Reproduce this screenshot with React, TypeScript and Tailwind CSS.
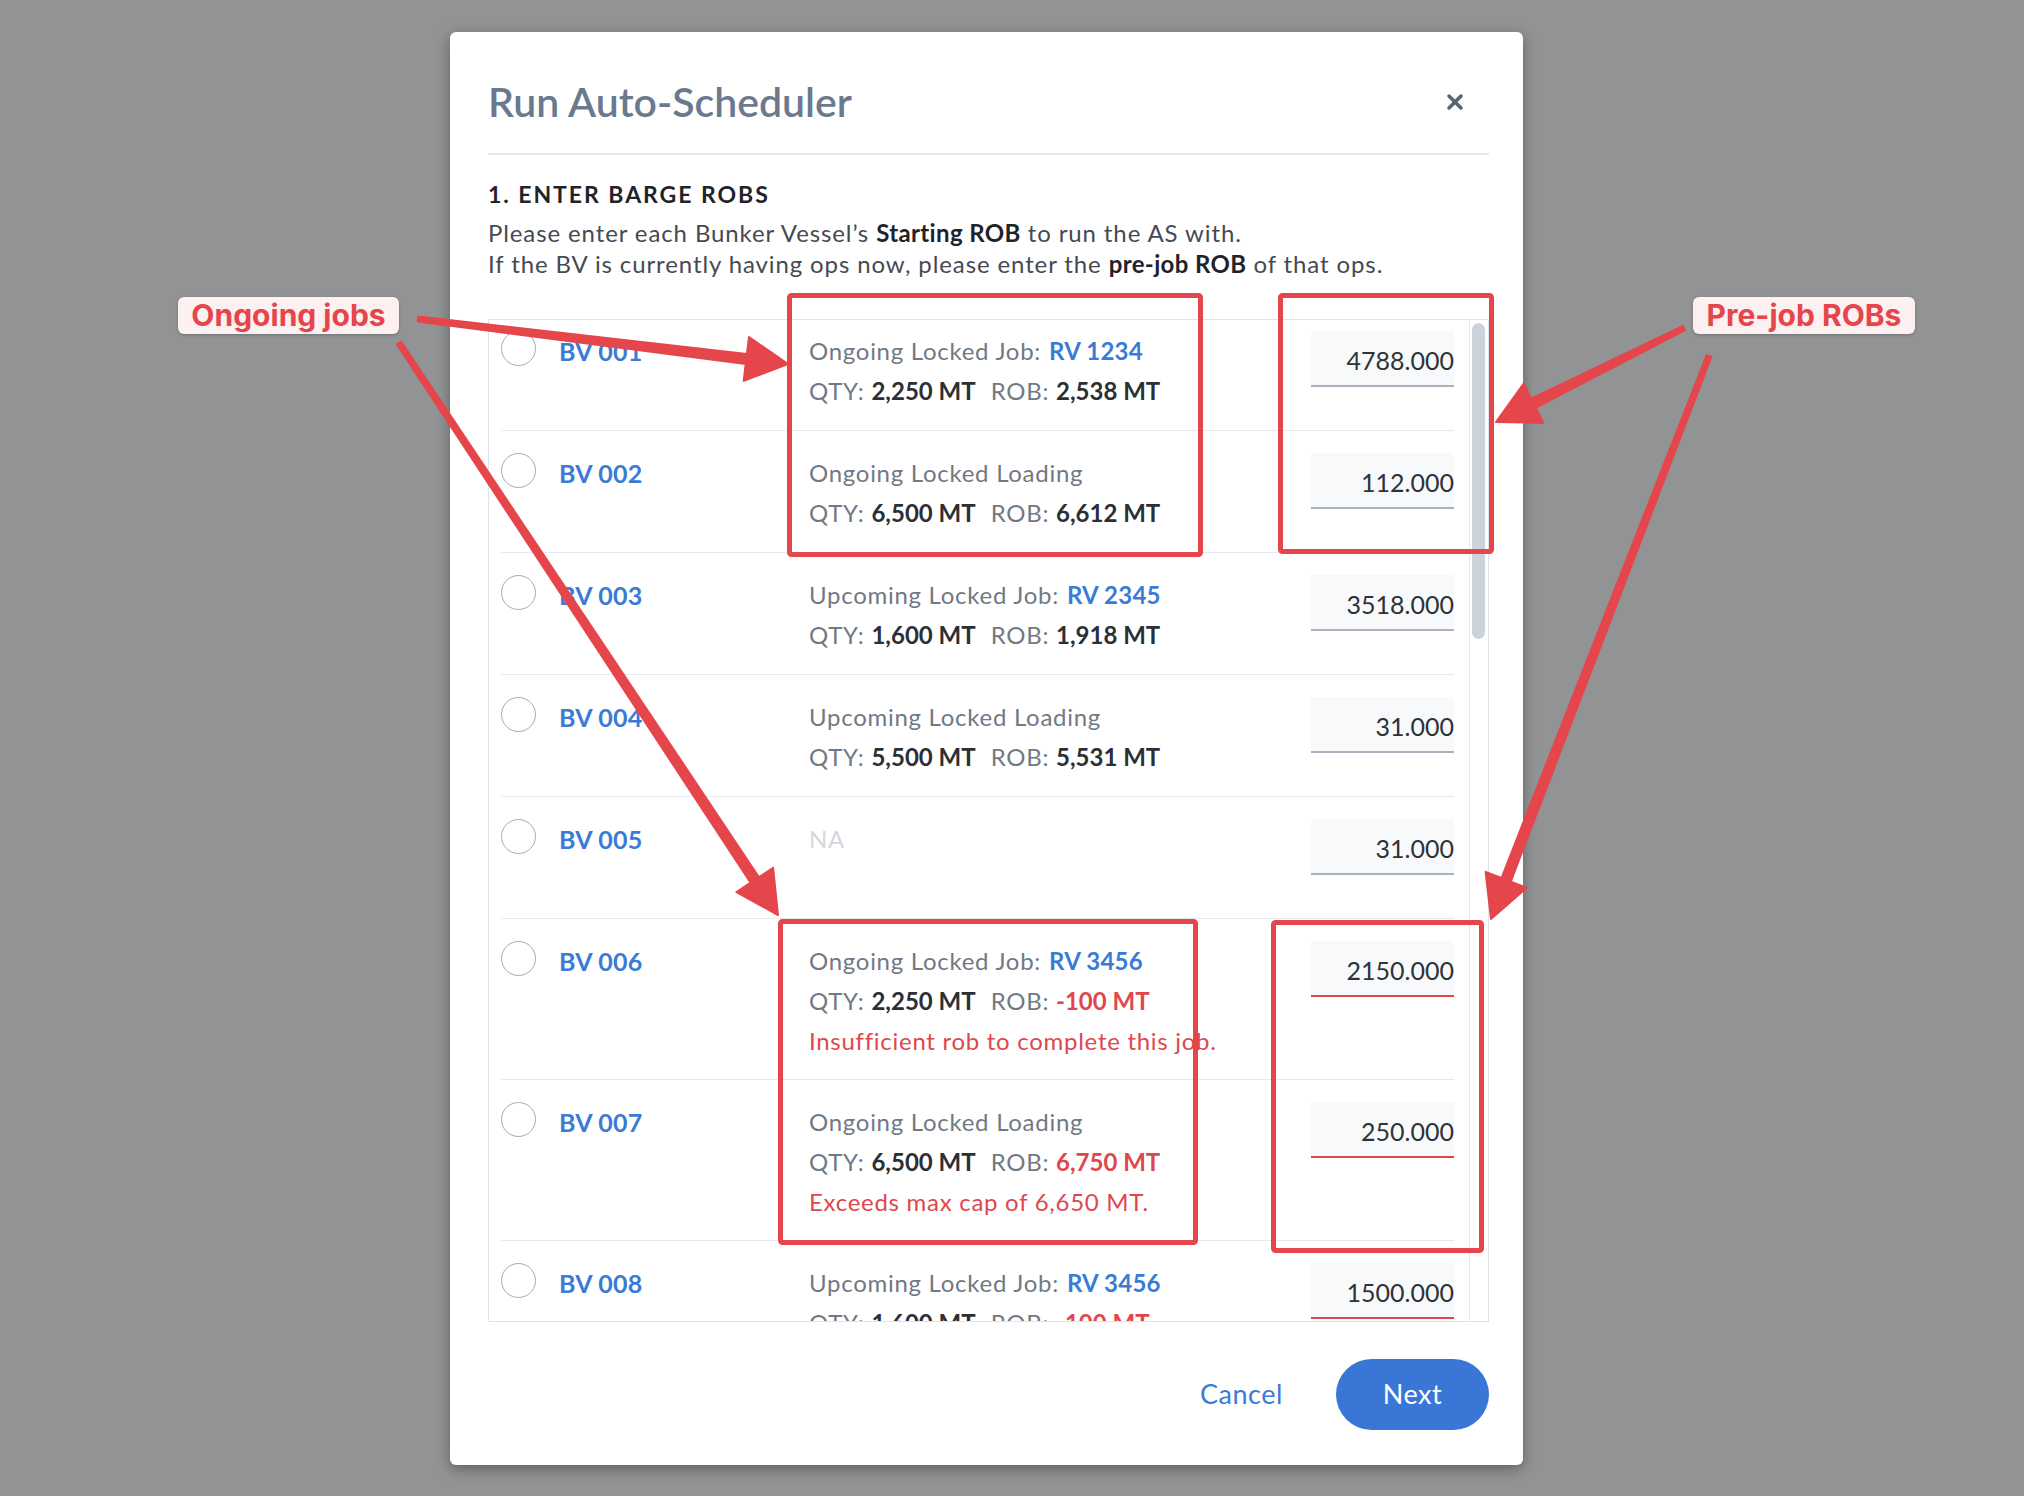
import React from 'react';
import { X } from 'lucide-react';

type Row = {
  id: string;
  phase?: 'Ongoing' | 'Upcoming';
  kind: 'job' | 'loading' | 'none';
  rv?: string;
  qty?: string;
  rob?: string;
  robBad?: boolean;
  error?: string;
  value: string;
  invalid?: boolean;
};

const rows: Row[] = [
  { id: 'BV 001', phase: 'Ongoing', kind: 'job', rv: 'RV 1234', qty: '2,250 MT', rob: '2,538 MT', value: '4788.000' },
  { id: 'BV 002', phase: 'Ongoing', kind: 'loading', qty: '6,500 MT', rob: '6,612 MT', value: '112.000' },
  { id: 'BV 003', phase: 'Upcoming', kind: 'job', rv: 'RV 2345', qty: '1,600 MT', rob: '1,918 MT', value: '3518.000' },
  { id: 'BV 004', phase: 'Upcoming', kind: 'loading', qty: '5,500 MT', rob: '5,531 MT', value: '31.000' },
  { id: 'BV 005', kind: 'none', value: '31.000' },
  {
    id: 'BV 006', phase: 'Ongoing', kind: 'job', rv: 'RV 3456', qty: '2,250 MT', rob: '-100 MT', robBad: true,
    error: 'Insufficient rob to complete this job.', value: '2150.000', invalid: true
  },
  {
    id: 'BV 007', phase: 'Ongoing', kind: 'loading', qty: '6,500 MT', rob: '6,750 MT', robBad: true,
    error: 'Exceeds max cap of 6,650 MT.', value: '250.000', invalid: true
  },
  { id: 'BV 008', phase: 'Upcoming', kind: 'job', rv: 'RV 3456', qty: '1,600 MT', rob: '-100 MT', robBad: true, value: '1500.000', invalid: true }
];

// tapered arrow: thin tail, thicker near the head
const arrowPoints = (x1: number, y1: number, x2: number, y2: number, w0: number, w1: number, hl: number, hw: number) => {
  const len = Math.hypot(x2 - x1, y2 - y1);
  const dx = (x2 - x1) / len;
  const dy = (y2 - y1) / len;
  const nx = -dy;
  const ny = dx;
  const bx = x2 - dx * hl;
  const by = y2 - dy * hl;
  const pts = [
    [x1 + (nx * w0) / 2, y1 + (ny * w0) / 2],
    [bx + (nx * w1) / 2, by + (ny * w1) / 2],
    [bx + (nx * hw) / 2, by + (ny * hw) / 2],
    [x2, y2],
    [bx - (nx * hw) / 2, by - (ny * hw) / 2],
    [bx - (nx * w1) / 2, by - (ny * w1) / 2],
    [x1 - (nx * w0) / 2, y1 - (ny * w0) / 2]
  ];
  return pts.map(p => `${p[0].toFixed(1)},${p[1].toFixed(1)}`).join(' ');
};

const boxes = [
  { l: 787, t: 293, r: 1203, b: 557 },
  { l: 1278, t: 293, r: 1494, b: 554 },
  { l: 778, t: 919, r: 1198, b: 1245 },
  { l: 1271, t: 920, r: 1484, b: 1253 }
];

const arrows = [
  [418, 319, 788, 364],
  [399, 343, 778, 915],
  [1684, 328, 1496, 422],
  [1709, 356, 1491, 919]
];

const JobInfo: React.FC<{ row: Row }> = ({ row }) => {
  if (row.kind === 'none') {
    return <div className="min-h-[80px] leading-[40px] text-[#d3d8de]">NA</div>;
  }
  return (
    <div className="min-h-[80px] leading-[40px]">
      <div className="text-[#717984]">
        {row.phase} Locked {row.kind === 'job' ? 'Job:' : 'Loading'}
        {row.rv && <span className="ml-[8px] font-bold tracking-[0.01em] text-[#3a7bd5]">{row.rv}</span>}
      </div>
      <div className="text-[#717984]">
        QTY: <span className="font-bold tracking-normal text-[#2b2f36]">{row.qty}</span>
        <span className="ml-[15px]">ROB: </span>
        <span className={`font-bold tracking-normal ${row.robBad ? 'text-[#e0474c]' : 'text-[#2b2f36]'}`}>{row.rob}</span>
      </div>
      {row.error && <div className="leading-[39px] text-[#e0474c]">{row.error}</div>}
    </div>
  );
};

const BargeRow: React.FC<{ row: Row }> = ({ row }) => (
  <div className="flex items-start pl-[12px] pr-[15px]">
    <div className="flex flex-1 items-start border-b border-[#e6eaf0] pt-[22px] pb-[19px]">
      <div className="h-[35px] w-[35px] shrink-0 rounded-full border-[1.5px] border-[#a3adba] bg-white" />
      <div className="ml-[23px] w-[250px] shrink-0 text-[25px] font-bold leading-[40px] tracking-[0.01em] text-[#3a7bd5]">{row.id}</div>
      <div className="flex-1 text-[24px] tracking-[0.03em]">
        <JobInfo row={row} />
      </div>
      <input
        readOnly
        value={row.value}
        className={`h-[56px] w-[143px] shrink-0 bg-[#f8f9fb] text-right text-[25px] text-[#2e3239] outline-none border-b-2 pt-[4px] ${
          row.invalid ? 'border-[#e0474c]' : 'border-[#a9b1bd]'
        }`}
      />
    </div>
  </div>
);

export default function App() {
  return (
    <div className="relative min-h-[1496px] w-[2024px] overflow-hidden bg-[#929395] pt-[32px] font-['Lato','Liberation_Sans',sans-serif]">
      <div className="ml-[450px] w-[1073px] rounded-[6px] bg-white pl-[38px] pr-[34px] pt-[46px] pb-[35px] shadow-[0_4px_14px_rgba(0,0,0,0.35)]">
        <div className="flex items-center justify-between border-b-2 border-[#e3e8f0] pb-[27px]">
          <h1 className="text-[41px] font-semibold leading-[48px] text-[#6b798e]">Run Auto-Scheduler</h1>
          <X className="mr-[22px] h-[24px] w-[24px] text-[#5b6370]" strokeWidth={3.5} />
        </div>

        <h2 className="mt-[24px] text-[23px] font-bold leading-[30px] tracking-[0.085em] text-[#1f232a]">1. ENTER BARGE ROBS</h2>
        <p className="mt-[8px] text-[24px] leading-[31px] tracking-[0.037em] text-[#454a52]">
          Please enter each Bunker Vessel’s <span className="font-bold tracking-[0.015em] text-[#1f232a]">Starting ROB</span> to run the AS with.
          <br />
          If the BV is currently having ops now, please enter the <span className="font-bold tracking-[0.015em] text-[#1f232a]">pre-job ROB</span> of that ops.
        </p>

        <div className="mt-[40px] flex h-[1003px] border border-[#dfe4ea]">
          <div className="flex-1 overflow-hidden">
            <div className="-mt-[11px]">
              {rows.map(row => (
                <BargeRow key={row.id} row={row} />
              ))}
            </div>
          </div>
          <div className="w-[19px] shrink-0 border-l border-[#e3e7ee] pl-[2px] pt-[3px]">
            <div className="h-[316px] w-[13px] rounded-full bg-[#cbd3dc]" />
          </div>
        </div>

        <div className="mt-[37px] flex items-center justify-end gap-[53px]">
          <button className="text-[27px] tracking-[0.02em] text-[#3a7bd5]">Cancel</button>
          <button className="h-[71px] w-[153px] rounded-full bg-[#3a76d6] text-[27px] tracking-[0.02em] text-white">Next</button>
        </div>
      </div>

      {/* annotation layer */}
      <svg className="pointer-events-none absolute left-0 top-0" width={2024} height={1496}>
        {boxes.map((b, i) => (
          <rect
            key={i}
            x={b.l + 2.5}
            y={b.t + 2.5}
            width={b.r - b.l - 5}
            height={b.b - b.t - 5}
            rx={2}
            fill="none"
            stroke="#e5464b"
            strokeWidth={5}
          />
        ))}
        {arrows.map((a, i) => (
          <polygon
            key={i}
            points={arrowPoints(a[0], a[1], a[2], a[3], 5, 10, 42, 44)}
            fill="#e5464b"
            stroke="#e5464b"
            strokeWidth={2}
            strokeLinejoin="round"
          />
        ))}
      </svg>
      <div className="absolute left-[178px] top-[297px] flex h-[37px] w-[221px] items-center justify-center rounded-[6px] bg-[#fcf0f1] font-['Inter',sans-serif] text-[30px] font-bold text-[#e5464b] shadow-[0_1px_3px_rgba(0,0,0,0.25)]">
        Ongoing jobs
      </div>
      <div className="absolute left-[1693px] top-[297px] flex h-[37px] w-[222px] items-center justify-center rounded-[6px] bg-[#fcf0f1] font-['Inter',sans-serif] text-[30px] font-bold text-[#e5464b] shadow-[0_1px_3px_rgba(0,0,0,0.25)]">
        Pre-job ROBs
      </div>
    </div>
  );
}
